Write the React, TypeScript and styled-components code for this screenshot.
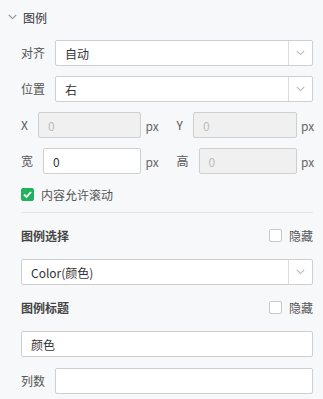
import React from "react";
import styled, { createGlobalStyle } from "styled-components";

const GlobalStyle = createGlobalStyle`
  html, body {
    margin: 0;
    padding: 0;
    background: #f7f8fa;
  }
  body {
    font-family: "Noto Sans CJK SC", "Noto Sans", sans-serif;
    font-size: 12px;
    color: #333;
  }
`;

const Panel = styled.div`
  width: 323px;
  height: 399px;
  box-sizing: border-box;
  background: #f7f8fa;
  overflow: hidden;
`;

const Header = styled.div`
  display: flex;
  align-items: center;
  height: 34px;
  padding-left: 8px;
  gap: 6px;
  color: #333;
  font-size: 12px;
`;

const Body = styled.div`
  padding: 6px 10px 0 21px;
  display: flex;
  flex-direction: column;
`;

const Row = styled.div<{ $mt?: number }>`
  display: flex;
  align-items: center;
  margin-top: ${(p) => p.$mt ?? 0}px;
`;

const Label = styled.span`
  width: 34px;
  flex: none;
  color: #555;
  line-height: 26px;
`;

const Box = styled.div<{ $disabled?: boolean }>`
  flex: 1;
  min-width: 0;
  height: 26px;
  box-sizing: border-box;
  border: 1px solid #cfcfcf;
  border-radius: 2px;
  background: ${(p) => (p.$disabled ? "#f0f0f0" : "#fff")};
  color: ${(p) => (p.$disabled ? "#bdbdbd" : "#333")};
  display: flex;
  align-items: center;
  padding-left: 9px;
`;

const SelectBox = styled(Box)`
  padding-right: 0;
`;

const SelectValue = styled.span`
  flex: 1;
`;

const Arrow = styled.span`
  width: 23px;
  height: 100%;
  border-left: 1px solid #dcdcdc;
  display: flex;
  align-items: center;
  justify-content: center;
`;

const Pair = styled.div`
  display: grid;
  grid-template-columns: 1fr 1fr;
  column-gap: 19px;
`;

const Half = styled.div`
  display: flex;
  align-items: center;
`;

const ShortLabel = styled.span`
  color: #555;
  margin-right: 10px;
  line-height: 26px;
`;

const Unit = styled.span<{ $gap: number }>`
  color: #666;
  margin-left: ${(p) => p.$gap}px;
  width: 12px;
`;

const Check = styled.span<{ $checked?: boolean }>`
  width: 13px;
  height: 13px;
  box-sizing: border-box;
  border-radius: 2px;
  flex: none;
  display: flex;
  align-items: center;
  justify-content: center;
  background: ${(p) => (p.$checked ? "#20b35c" : "#fff")};
  border: 1px solid ${(p) => (p.$checked ? "#20b35c" : "#c8c8c8")};
`;

const CheckRow = styled.div<{ $mt: number }>`
  display: flex;
  align-items: center;
  height: 13px;
  gap: 7px;
  margin-top: ${(p) => p.$mt}px;
  color: #555;
`;

const Divider = styled.div`
  height: 1px;
  background: #e5e6e8;
  margin-top: 11px;
`;

const TitleRow = styled.div<{ $mt: number }>`
  display: flex;
  align-items: center;
  justify-content: space-between;
  height: 13px;
  margin-top: ${(p) => p.$mt}px;
`;

const Title = styled.span`
  font-weight: bold;
  color: #444;
`;

const HideToggle = styled.span`
  display: flex;
  align-items: center;
  gap: 7px;
  color: #555;
`;

const Chevron = ({ color = "#b8bcc4" }: { color?: string }) => (
  <svg width="9" height="6" viewBox="0 0 9 6">
    <path d="M0.8 1 L4.5 4.6 L8.2 1" fill="none" stroke={color} strokeWidth="1.1" />
  </svg>
);

const Select = ({ value, disabled }: { value: string; disabled?: boolean }) => (
  <SelectBox $disabled={disabled}>
    <SelectValue>{value}</SelectValue>
    <Arrow>
      <Chevron />
    </Arrow>
  </SelectBox>
);

export default function App() {
  return (
    <Panel>
      <GlobalStyle />
      <Header>
        <Chevron color="#8c94a3" />
        <span>图例</span>
      </Header>
      <Body>
        <Row>
          <Label>对齐</Label>
          <Select value="自动" />
        </Row>
        <Row $mt={10}>
          <Label>位置</Label>
          <Select value="右" />
        </Row>
        <Pair style={{ marginTop: 10 }}>
          <Half>
            <ShortLabel>X</ShortLabel>
            <Box $disabled>0</Box>
            <Unit $gap={5}>px</Unit>
          </Half>
          <Half>
            <ShortLabel>Y</ShortLabel>
            <Box $disabled>0</Box>
            <Unit $gap={4}>px</Unit>
          </Half>
        </Pair>
        <Pair style={{ marginTop: 10 }}>
          <Half>
            <ShortLabel>宽</ShortLabel>
            <Box>0</Box>
            <Unit $gap={5}>px</Unit>
          </Half>
          <Half>
            <ShortLabel>高</ShortLabel>
            <Box $disabled>0</Box>
            <Unit $gap={4}>px</Unit>
          </Half>
        </Pair>
        <CheckRow $mt={14}>
          <Check $checked>
            <svg width="9" height="7" viewBox="0 0 9 7">
              <path d="M1 3.5 L3.5 6 L8 1" fill="none" stroke="#fff" strokeWidth="1.8" />
            </svg>
          </Check>
          <span>内容允许滚动</span>
        </CheckRow>
        <Divider />
        <TitleRow $mt={16}>
          <Title>图例选择</Title>
          <HideToggle>
            <Check />
            <span>隐藏</span>
          </HideToggle>
        </TitleRow>
        <Row $mt={17}>
          <Select value="Color(颜色)" />
        </Row>
        <TitleRow $mt={16}>
          <Title>图例标题</Title>
          <HideToggle>
            <Check />
            <span>隐藏</span>
          </HideToggle>
        </TitleRow>
        <Row $mt={17}>
          <Box>颜色</Box>
        </Row>
        <Row $mt={11}>
          <Label>列数</Label>
          <Box />
        </Row>
      </Body>
    </Panel>
  );
}
